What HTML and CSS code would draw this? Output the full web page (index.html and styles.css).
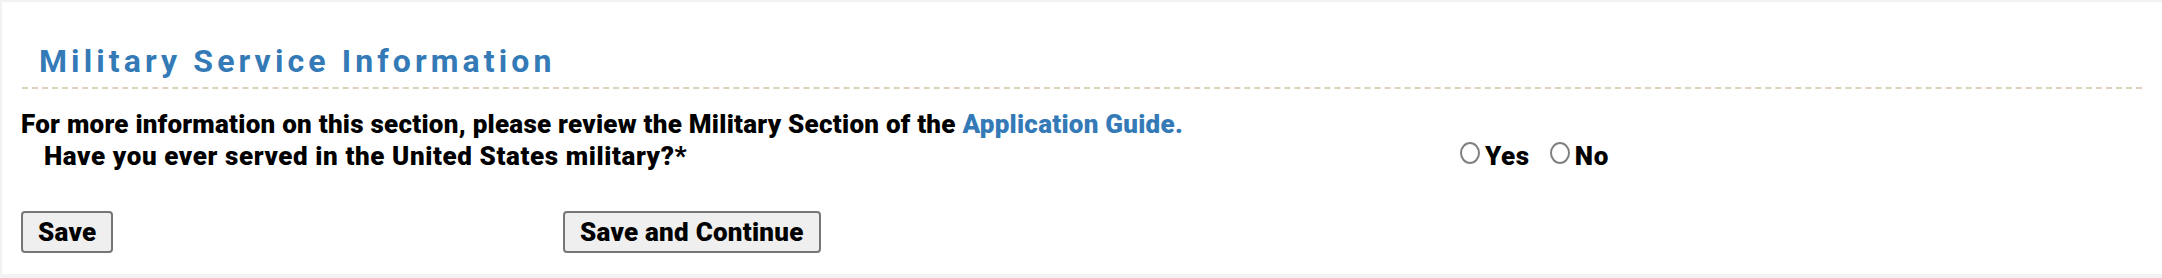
FILE: index.html
```html
<!DOCTYPE html>
<html lang="en">
<head>
<meta charset="utf-8">
<title>Military Service Information</title>
<link rel="stylesheet" href="styles.css">
</head>
<body>
<div class="panel">
  <div class="header">
    <h2 class="title">Military Service Information</h2>
  </div>
  <div class="content">
    <p class="intro">For more information on this section, please review the Military Section of the <a class="link" href="#">Application Guide.</a></p>
    <div class="question-row">
      <div class="question">Have you ever served in the United States military?*</div>
      <div class="answers">
        <label class="option"><input class="radio" type="radio" name="served" value="yes"><span>Yes</span></label>
        <label class="option"><input class="radio" type="radio" name="served" value="no"><span>No</span></label>
      </div>
    </div>
    <div class="actions">
      <div class="action-cell"><button class="btn" type="button">Save</button></div>
      <div class="action-cell"><button class="btn" type="button">Save and Continue</button></div>
    </div>
  </div>
</div>
</body>
</html>
```

FILE: styles.css
```css
html, body {
  margin: 0;
  padding: 0;
}
body {
  background: #f2f2f2;
  font-family: Roboto, "Liberation Sans", Arial, sans-serif;
  padding: 2px 0 4px 2px;
}
.panel {
  background: #ffffff;
  padding: 40px 0 21px 0;
}
.header {
  margin: 0 20px;
  padding: 0 0 7px 17px;
  border-bottom: 2px dashed #ddd3bb;
}
.title {
  margin: 0;
  font-size: 32px;
  line-height: 38px;
  font-weight: 700;
  letter-spacing: 4.1px;
  color: #337ab7;
}
.content {
  padding: 20px 0 0 19px;
}
.intro {
  margin: 0;
  font-size: 26px;
  line-height: 31px;
  font-weight: 900;
  letter-spacing: 0.25px;
  color: #000;
}
.link {
  color: #337ab7;
  text-decoration: none;
}
.question-row {
  display: grid;
  grid-template-columns: 1416px auto;
  padding-left: 23px;
  font-size: 26px;
  line-height: 32px;
  font-weight: 900;
  letter-spacing: 0.6px;
  color: #000;
}
.answers {
  display: flex;
  gap: 20px;
}
.option {
  display: inline-flex;
  align-items: flex-start;
}
.radio {
  appearance: none;
  -webkit-appearance: none;
  width: 20px;
  height: 22px;
  margin: 2px 5px 0 0;
  border: 2px solid #808080;
  border-radius: 50%;
  background: #fff;
  box-sizing: border-box;
}
.actions {
  display: grid;
  grid-template-columns: 542px auto;
  margin-top: 39px;
}
.action-cell {
  display: flex;
}
.btn {
  font-family: Roboto, "Liberation Sans", Arial, sans-serif;
  font-size: 26px;
  font-weight: 900;
  letter-spacing: 0.25px;
  height: 42px;
  padding: 0 15px;
  background: #efefef;
  color: #000;
  border: 2px solid #767676;
  border-radius: 4px;
}
```
